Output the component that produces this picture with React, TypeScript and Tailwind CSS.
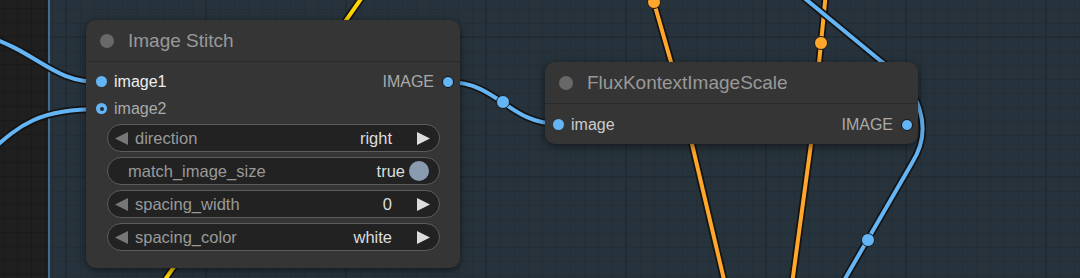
import React from "react";

const BLUE = "#64b5f6";
const ORANGE = "#ffa62b";
const YELLOW = "#ffd400";

function Link({ d, color }: { d: string; color: string }) {
  return (
    <g fill="none" strokeLinecap="round" strokeLinejoin="round">
      <path d={d} stroke="#141414" strokeWidth={7.5} />
      <path d={d} stroke={color} strokeWidth={4} />
    </g>
  );
}

function Dot({ x, y, color }: { x: number; y: number; color: string }) {
  return <circle cx={x} cy={y} r={6.5} fill={color} stroke="#1a1a1a" strokeWidth={1} />;
}

function LeftArrow() {
  return (
    <svg width="13" height="13" viewBox="0 0 13 13" className="shrink-0">
      <polygon points="13,0 13,13 0,6.5" fill="#777777" />
    </svg>
  );
}

function RightArrow() {
  return (
    <svg width="13" height="13" viewBox="0 0 13 13" className="shrink-0">
      <polygon points="0,0 0,13 13,6.5" fill="#dddddd" />
    </svg>
  );
}

function ComboWidget({ label, value }: { label: string; value: string }) {
  return (
    <div className="flex h-[28px] items-center rounded-full border border-[#5c5c5c] bg-[#222222] pl-[7px] pr-[9px] text-[16.5px] leading-none">
      <LeftArrow />
      <span className="ml-[7px] flex-1 text-[#999999]">{label}</span>
      <span className="text-[#dddddd]">{value}</span>
      <span className="ml-[25px] flex">
        <RightArrow />
      </span>
    </div>
  );
}

function ToggleWidget({ label, value }: { label: string; value: string }) {
  return (
    <div className="flex h-[28px] items-center rounded-full border border-[#5c5c5c] bg-[#222222] pl-[20px] pr-[10px] text-[16.5px] leading-none">
      <span className="flex-1 text-[#999999]">{label}</span>
      <span className="text-[#dddddd]">{value}</span>
      <span className="ml-[4px] h-[20px] w-[20px] rounded-full bg-[#8a9bb0]" />
    </div>
  );
}

function SlotDot({ ring = false, border = false }: { ring?: boolean; border?: boolean }) {
  if (ring) {
    return (
      <span className="flex h-[11px] w-[11px] shrink-0 items-center justify-center rounded-full bg-[#64b5f6]">
        <span className="h-[4px] w-[4px] rounded-full bg-[#2a2a2a]" />
      </span>
    );
  }
  return (
    <span
      className={
        border
          ? "h-[12px] w-[12px] shrink-0 rounded-full border-[1.5px] border-[#111111] bg-[#64b5f6]"
          : "h-[11px] w-[11px] shrink-0 rounded-full bg-[#64b5f6]"
      }
    />
  );
}

function Title({ text }: { text: string }) {
  return (
    <div className="flex h-[42px] items-center border-b border-[#2a2a2a] pl-[14px]">
      <span className="h-[14px] w-[14px] rounded-full bg-[#686868]" />
      <span className="ml-[14px] text-[19px] leading-none text-[#999999]">{text}</span>
    </div>
  );
}

export default function App() {
  return (
    <div className="relative h-[278px] w-[1080px] overflow-hidden bg-[#27333c] font-['Liberation_Sans',Arial,sans-serif]">
      <svg className="absolute inset-0" width="1080" height="278" viewBox="0 0 1080 278">
        <defs>
          <pattern id="minor" width="14" height="14" patternUnits="userSpaceOnUse" x="10" y="9">
            <rect x="0" y="0" width="14" height="1" fill="#232e36" />
            <rect x="0" y="0" width="1" height="14" fill="#232e36" />
          </pattern>
          <pattern id="major" width="140" height="140" patternUnits="userSpaceOnUse" x="65" y="36">
            <rect x="0" y="0" width="140" height="2" fill="#222c34" />
            <rect x="0" y="0" width="2" height="140" fill="#222c34" />
          </pattern>
          <pattern id="leftminor" width="14" height="14" patternUnits="userSpaceOnUse" x="3" y="8">
            <rect x="0" y="0" width="14" height="1" fill="#1a1a1a" />
            <rect x="0" y="0" width="1" height="14" fill="#1a1a1a" />
          </pattern>
        </defs>
        <rect x="0" y="0" width="1080" height="278" fill="url(#minor)" />
        <rect x="0" y="0" width="1080" height="278" fill="url(#major)" />
        <rect x="0" y="0" width="48" height="278" fill="#1f1f1f" />
        <rect x="0" y="0" width="48" height="278" fill="url(#leftminor)" />
        <rect x="48" y="0" width="2" height="278" fill="#426c93" />

        {/* yellow link behind node 1 */}
        <Link d="M 162 284 L 363 -4" color={YELLOW} />
        {/* blue links into Image Stitch */}
        <Link d="M -20 34 C 40 52, 50 82, 100 82" color={BLUE} />
        <Link d="M -10 152 C 20 124, 40 109, 100 109" color={BLUE} />
        {/* link between nodes */}
        <Link d="M 448 82 C 498 82, 509 124, 559 124" color={BLUE} />
        <Dot x={503} y={102} color={BLUE} />
        {/* orange links */}
        <Link d="M 651 -8 L 671 62 L 692 144 L 725 284" color={ORANGE} />
        <Dot x={654} y={2} color={ORANGE} />
        <Link d="M 826 -8 L 821 43 L 811 144 L 792 284" color={ORANGE} />
        <Dot x={821} y={43} color={ORANGE} />
        {/* blue diagonal link */}
        <Link d="M 797 -8 L 882 62 C 920 88, 934 128, 912 163 L 842 284" color={BLUE} />
        <Dot x={868} y={240} color={BLUE} />
      </svg>

      {/* Image Stitch node */}
      <div className="absolute left-[86px] top-[20px] flex h-[248px] w-[374px] flex-col rounded-[10px] bg-[#353535] shadow-[0_2px_8px_rgba(0,0,0,0.55)]">
        <Title text="Image Stitch" />
        <div className="flex flex-col pt-[6px]">
          <div className="flex h-[27px] items-center pl-[10px] pr-[6px]">
            <SlotDot />
            <span className="ml-[7px] flex-1 text-[16px] leading-none text-[#eeeeee]">image1</span>
            <span className="text-[16px] leading-none text-[#aaaaaa]">IMAGE</span>
            <span className="ml-[8px] flex">
              <SlotDot border />
            </span>
          </div>
          <div className="flex h-[27px] items-center pl-[10px] pr-[6px]">
            <SlotDot ring />
            <span className="ml-[7px] flex-1 text-[16px] leading-none text-[#aaaaaa]">image2</span>
          </div>
        </div>
        <div className="mt-[2px] flex flex-col gap-[5px] pl-[21px] pr-[20px]">
          <ComboWidget label="direction" value="right" />
          <ToggleWidget label="match_image_size" value="true" />
          <ComboWidget label="spacing_width" value="0" />
          <ComboWidget label="spacing_color" value="white" />
        </div>
      </div>

      {/* FluxKontextImageScale node */}
      <div className="absolute left-[545px] top-[62px] flex h-[82px] w-[373px] flex-col rounded-[10px] bg-[#353535] shadow-[0_2px_8px_rgba(0,0,0,0.55)]">
        <Title text="FluxKontextImageScale" />
        <div className="flex flex-col pt-[7px]">
          <div className="flex h-[27px] items-center pl-[8px] pr-[5px]">
            <SlotDot />
            <span className="ml-[7px] flex-1 text-[16px] leading-none text-[#cccccc]">image</span>
            <span className="text-[16px] leading-none text-[#aaaaaa]">IMAGE</span>
            <span className="ml-[8px] flex">
              <SlotDot border />
            </span>
          </div>
        </div>
      </div>
    </div>
  );
}
